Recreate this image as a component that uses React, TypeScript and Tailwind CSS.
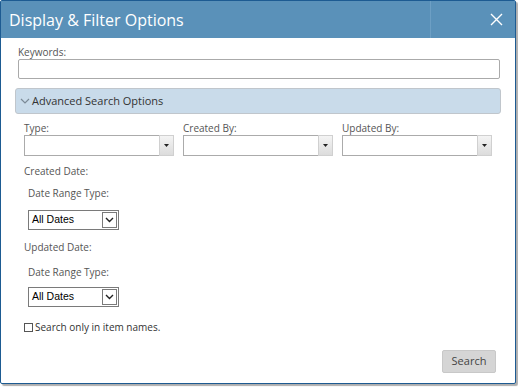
import React from 'react';

const font = { fontFamily: '"Open Sans", "Noto Sans", sans-serif' };

const ComboBox = ({ label }: { label: string }) => (
  <div className="flex flex-col w-[150px]">
    <label className="text-[10px] leading-[12px] text-[#555] mb-[1px]">{label}</label>
    <div className="flex h-[21px]">
      <div className="flex-1 border border-[#ababab] border-r-0 bg-white" />
      <div className="w-[15px] flex items-center justify-center bg-gradient-to-b from-[#f4f4f4] to-[#dcdcdc] border border-[#d0d0d0]">
        <svg width="5" height="3" viewBox="0 0 5 3">
          <path d="M0 0H5L2.5 3Z" fill="#222" />
        </svg>
      </div>
    </div>
  </div>
);

const DateSelect = () => (
  <div className="flex items-center w-[91px] h-[20px] border border-[#7a7a7a] bg-white">
    <span className="flex-1 pl-[3px] text-[10.5px] text-black" style={{ fontFamily: '"Liberation Sans", Arial, sans-serif' }}>
      All Dates
    </span>
    <div className="w-[15px] h-[16px] mr-[1px] border border-[#7a7a7a] flex items-center justify-center bg-white">
      <svg width="9" height="6" viewBox="0 0 9 6">
        <path d="M1 1L4.5 4.5L8 1" stroke="#222" strokeWidth="1.4" fill="none" />
      </svg>
    </div>
  </div>
);

export default function App() {
  return (
    <div className="w-[518px] h-[387px] bg-white" style={font}>
      <div className="w-[516px] h-[384px] border border-[#1d5b92] rounded-[2px] bg-white flex flex-col shadow-[2px_2px_1px_rgba(120,120,120,0.6)]">
        {/* Header */}
        <div className="h-[37px] bg-[#5a91b9] flex items-center">
          <span className="flex-1 pl-[8px] text-[16px] text-white leading-none">Display &amp; Filter Options</span>
          <div className="w-[85px] h-full border-l border-[#6d9fc4] flex items-center justify-end pr-[12px]">
            <svg width="13" height="13" viewBox="0 0 13 13">
              <path d="M1 1L12 12M12 1L1 12" stroke="#fff" strokeWidth="1.4" />
            </svg>
          </div>
        </div>

        {/* Body */}
        <div className="flex-1 flex flex-col px-[14px] pt-[8px]">
          <label className="pl-[3px] text-[10px] leading-[12px] text-[#555]">Keywords:</label>
          <div className="ml-[3px] mr-[1px] mt-[1px] h-[20px] border border-[#aaa] rounded-[2px] bg-white" />

          <div className="mt-[9px] h-[26px] bg-[#c9dbea] border border-[#c0c6cc] rounded-[3px] flex items-center pl-[4px]">
            <svg width="10" height="6" viewBox="0 0 10 6" className="mr-[2px]">
              <path d="M1 1L5 5L9 1" stroke="#7c8a96" strokeWidth="1.2" fill="none" />
            </svg>
            <span className="text-[11px] text-[#333]">Advanced Search Options</span>
          </div>

          <div className="pl-[9px] pt-[8px] flex flex-col">
            <div className="flex gap-[9px]">
              <ComboBox label="Type:" />
              <ComboBox label="Created By:" />
              <ComboBox label="Updated By:" />
            </div>

            <div className="mt-[9px] text-[10px] leading-[12px] text-[#555]">Created Date:</div>
            <div className="pl-[4px] flex flex-col">
              <div className="mt-[10px] text-[10px] leading-[12px] text-[#555]">Date Range Type:</div>
              <div className="mt-[11px]"><DateSelect /></div>
            </div>

            <div className="mt-[11px] text-[10px] leading-[12px] text-[#555]">Updated Date:</div>
            <div className="pl-[4px] flex flex-col">
              <div className="mt-[13px] text-[10px] leading-[12px] text-[#555]">Date Range Type:</div>
              <div className="mt-[9px]"><DateSelect /></div>
            </div>

            <div className="mt-[14px] flex items-center gap-[2px]">
              <div className="w-[9px] h-[9px] border border-[#555] bg-white" />
              <span className="text-[10px] leading-[12px] text-[#333]">Search only in item names.</span>
            </div>
          </div>

          <div className="flex justify-end mt-[17px] pr-[5px]">
            <button className="w-[54px] h-[23px] bg-[#d5d5d5] border border-[#c8c8c8] rounded-[2px] text-[11px] text-[#444]">
              Search
            </button>
          </div>
        </div>
      </div>
    </div>
  );
}
